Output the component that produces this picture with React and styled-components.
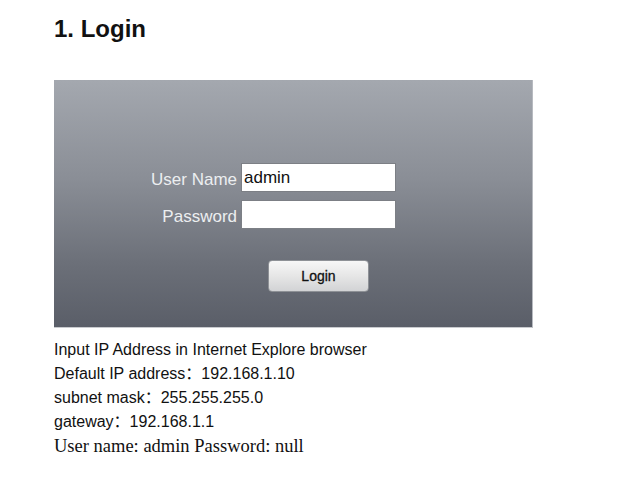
import styled, { createGlobalStyle } from 'styled-components';

const GlobalStyle = createGlobalStyle`
    body {
        margin: 0;
        background: #fff;
        font-family: "Liberation Sans", Arial, sans-serif;
    }
`;

export default function App() {

    return (
        <>
            <GlobalStyle />
            <Page>
                <Title>1. Login</Title>

                <Panel>
                    <Field>
                        <Label>User Name</Label>
                        <TextBox type="text" defaultValue="admin" />
                    </Field>
                    <Field>
                        <Label>Password</Label>
                        <TextBox type="password" />
                    </Field>
                    <LoginButton>Login</LoginButton>
                </Panel>

                <Notes>
                    <Line>Input IP Address in Internet Explore browser</Line>
                    <Line>Default IP address：192.168.1.10</Line>
                    <Line>subnet mask：255.255.255.0</Line>
                    <Line>gateway：192.168.1.1</Line>
                    <Line serif>User name: admin Password: null</Line>
                </Notes>
            </Page>
        </>
    );
}

const Page = styled.div`
    padding: 15px 0 0 54px;
`;

const Title = styled.h1`
    margin: 0 0 37px;
    font-size: 24px;
    line-height: 28px;
    font-weight: 700;
    color: #111;
`;

const Panel = styled.div`
    width: 479px;
    height: 248px;
    box-sizing: border-box;
    padding: 83px 0 0 95px;
    background: linear-gradient(180deg, #a4a8af 0%, #8a8e96 40%, #6b6f78 75%, #5a5e68 100%);
    border-right: 1px solid #b7bac0;
    border-bottom: 1px solid #c9cbcf;
    display: flex;
    flex-direction: column;
    gap: 8px;
`;

const Field = styled.div`
    display: flex;
    align-items: center;
    gap: 4px;
`;

const Label = styled.span`
    width: 88px;
    padding-top: 5px;
    text-align: right;
    font-size: 17px;
    color: #eceef0;
    white-space: nowrap;
`;

const TextBox = styled.input`
    width: 155px;
    height: 29px;
    box-sizing: border-box;
    margin: 0;
    padding: 0 2px;
    border: 1px solid #7c7f85;
    background: #fff;
    font-family: "Liberation Sans", Arial, sans-serif;
    font-size: 17px;
    color: #111;
    outline: none;
`;

const LoginButton = styled.button`
    margin: 23px 0 0 119px;
    width: 101px;
    height: 32px;
    border: 1px solid #8e9196;
    border-radius: 4px;
    background: linear-gradient(180deg, #f7f7f7 0%, #e6e6e6 50%, #d2d3d5 100%);
    font-family: "Liberation Sans", Arial, sans-serif;
    font-size: 14px;
    color: #111;
    -webkit-text-stroke: 0.3px #111;
    padding: 0;
`;

const Notes = styled.div`
    margin-top: 10px;
    font-family: "Liberation Sans", Arial, "Noto Sans CJK SC", sans-serif;
    font-size: 16px;
    line-height: 24px;
    color: #111;
`;

const Line = styled.div`
    ${(props) => props.serif && `
        font-family: "Liberation Serif", "Times New Roman", serif;
        font-size: 18.5px;
    `}
`;
